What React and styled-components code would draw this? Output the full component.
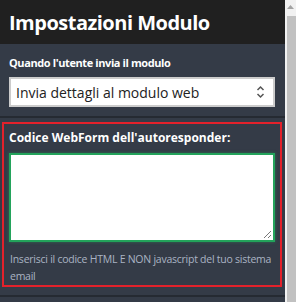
import React from "react";
import styled, { createGlobalStyle } from "styled-components";

const Global = createGlobalStyle`
  html, body { margin: 0; padding: 0; background: #343b47; }
  body { font-family: "Open Sans", "Noto Sans", sans-serif; }
  * { box-sizing: border-box; }
`;

const Page = styled.div`
  display: flex;
  width: 296px;
  height: 302px;
  overflow: hidden;
`;

const Main = styled.div`
  width: 285px;
  background: #343b47;
  display: flex;
  flex-direction: column;
`;

const Header = styled.div`
  height: 44px;
  background: #202020;
  padding-left: 9px;
  display: flex;
  align-items: center;
`;

const Title = styled.h1`
  margin: 0;
  color: #fff;
  font-size: 20px;
  font-weight: 700;
  letter-spacing: -0.5px;
`;

const Section = styled.div`
  padding: 11px 10px 9px 9px;
  display: flex;
  flex-direction: column;
  gap: 6px;
  border-bottom: 2px solid #252a32;
`;

const Label = styled.label`
  color: #fff;
  font-size: ${(p) => p.$size}px;
  letter-spacing: ${(p) => p.$spacing}px;
  font-weight: 700;
  line-height: 16px;
`;

const SelectBox = styled.div`
  height: 30px;
  background: #fff;
  border: 2px solid #cccccc;
  display: flex;
  align-items: center;
  justify-content: space-between;
  padding: 0 8px 0 5px;
  color: #222;
  font-size: 14px;
`;

const Chevrons = styled.svg`
  display: block;
`;

const Boxed = styled.div`
  margin: 4px 3px 0 2px;
  border: 2px solid #e3212b;
  padding: 6px 5px 0 5px;
  display: flex;
  flex-direction: column;
  gap: 7px;
  height: 165px;
`;

const TextArea = styled.div`
  position: relative;
  height: 100px;
  background: #fff;
  border: 2px solid #23a35b;
  box-shadow: 0 0 3px rgba(35, 163, 91, 0.5);
`;

const Grip = styled.svg`
  position: absolute;
  right: 1px;
  bottom: 1px;
`;

const Help = styled.p`
  margin: 2px 0 0;
  color: #aab3c3;
  font-size: 10.5px;
  letter-spacing: -0.25px;
  line-height: 17px;
  padding-left: 1px;
`;

const Divider = styled.div`
  margin-top: 8px;
  height: 2px;
  background: #252a32;
`;

const Scrollbar = styled.div`
  width: 11px;
  background: #f1f1f1;
  display: flex;
  flex-direction: column;
  align-items: flex-end;
`;

const ArrowCell = styled.div`
  height: 16px;
  width: 100%;
  display: flex;
  justify-content: center;
  padding-top: 5px;
`;

const Thumb = styled.div`
  flex: 1;
  width: 9px;
  background: #c1c1c1;
`;

export default function App() {
  return (
    <>
      <Global />
      <Page>
        <Main>
          <Header>
            <Title>Impostazioni Modulo</Title>
          </Header>
          <Section>
            <Label $size={11} $spacing={-0.4}>Quando l'utente invia il modulo</Label>
            <SelectBox>
              <span>Invia dettagli al modulo web</span>
              <Chevrons width="9" height="14" viewBox="0 0 9 14">
                <path d="M1.5 5 L4.5 2 L7.5 5" fill="none" stroke="#555" strokeWidth="1.5" />
                <path d="M1.5 9 L4.5 12 L7.5 9" fill="none" stroke="#555" strokeWidth="1.5" />
              </Chevrons>
            </SelectBox>
          </Section>
          <Boxed>
            <Label $size={12} $spacing={0}>Codice WebForm dell'autoresponder:</Label>
            <TextArea>
              <Grip width="9" height="9" viewBox="0 0 9 9">
                <path d="M1 8 L8 1 M5 8 L8 5" stroke="#777" strokeWidth="1" />
              </Grip>
            </TextArea>
            <Help>Inserisci il codice HTML E NON javascript del tuo sistema email</Help>
          </Boxed>
          <Divider />
        </Main>
        <Scrollbar>
          <ArrowCell>
            <svg width="7" height="4" viewBox="0 0 7 4">
              <path d="M0 4 L3.5 0 L7 4 Z" fill="#a3a3a3" />
            </svg>
          </ArrowCell>
          <Thumb />
        </Scrollbar>
      </Page>
    </>
  );
}
